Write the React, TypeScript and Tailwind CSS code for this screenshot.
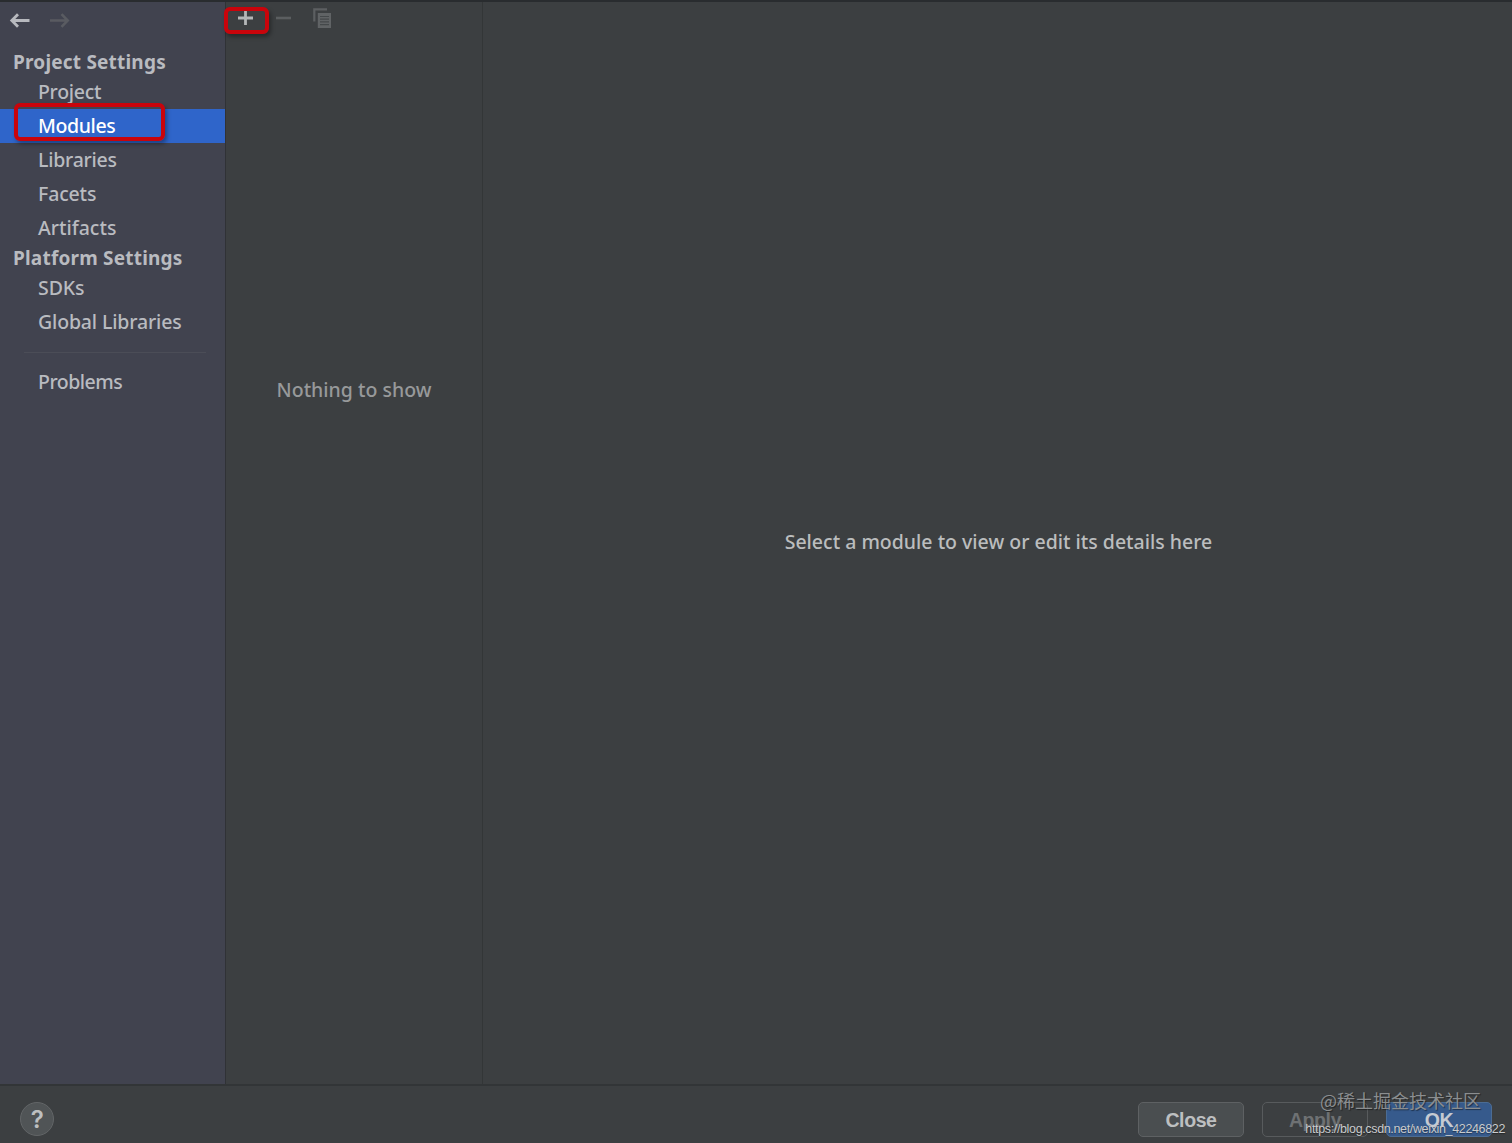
import clsx from "clsx";

interface NavItemProps {
  label: string;
  selected?: boolean;
  className?: string;
}

function NavItem({ label, selected, className }: NavItemProps) {
  return (
    <div
      className={clsx(
        "relative h-[34px] pl-[38px] leading-[33px]",
        selected ? "bg-[#2f65ca] text-white" : "text-[#b9bbc0]",
        className,
      )}
    >
      {label}
      {selected && (
        <span className="absolute left-[14px] -top-[6px] w-[151px] h-[38px] rounded-[6px] border-4 border-[#c9040b] shadow-[2px_3px_4px_rgba(0,0,0,0.35)]" />
      )}
    </div>
  );
}

function NavHeader({ label }: { label: string }) {
  return (
    <div className="h-[26px] pl-[13px] leading-[26px] text-[19px] font-bold tracking-[0.2px] text-[#b9bbc0]">
      {label}
    </div>
  );
}

function Sidebar() {
  return (
    <nav className="w-[225px] shrink-0 bg-[#41434f]">
      <div className="flex h-[47px] pt-[10px] pl-[9px] gap-[17px]">
        <svg width="22" height="17" viewBox="0 0 22 17" fill="none" stroke="#b7b9be" strokeWidth="2.8">
          <path d="M20.5 8.5H3M9 2.2L2.8 8.5L9 14.8" />
        </svg>
        <svg width="22" height="17" viewBox="0 0 22 17" fill="none" stroke="#595b61" strokeWidth="2.6">
          <path d="M2 8.5H19.5M13.5 2.2L19.7 8.5L13.5 14.8" />
        </svg>
      </div>
      <NavHeader label="Project Settings" />
      <NavItem label="Project" className="tracking-[-0.3px]" />
      <NavItem label="Modules" selected className="tracking-[-0.4px]" />
      <NavItem label="Libraries" className="tracking-[-0.25px]" />
      <NavItem label="Facets" className="tracking-[-0.15px]" />
      <NavItem label="Artifacts" />
      <NavHeader label="Platform Settings" />
      <NavItem label="SDKs" className="tracking-[-0.1px]" />
      <NavItem label="Global Libraries" className="tracking-[-0.15px]" />
      <div className="mt-[13px] mb-3 ml-6 mr-[19px] h-px bg-[#4b4d57]" />
      <NavItem label="Problems" className="tracking-[-0.5px]" />
    </nav>
  );
}

function ModuleList() {
  return (
    <section className="w-[258px] shrink-0 border-x border-l-[#303236] border-r-[#333637]">
      <div className="relative flex h-[40px] pt-[4px] pl-[11px]">
        <svg width="96" height="24" viewBox="0 0 96 24">
          <path d="M1 12H16M8.5 5V19" stroke="#b4b6b7" strokeWidth="2.8" />
          <path d="M39 12H54" stroke="#5b5e60" strokeWidth="2.6" />
          <path d="M77.3 15.5V3.3H90" fill="none" stroke="#5c5f61" strokeWidth="2.2" />
          <path d="M80.8 7H94V22H80.8Z" fill="#606365" />
          <path d="M83 10.5H92M83 13.2H92M83 15.9H92M83 18.6H92" stroke="#44484a" strokeWidth="1.2" />
        </svg>
        <span className="absolute -left-[2px] top-[5px] w-[45px] h-[27px] rounded-[6px] border-4 border-[#c9040b] shadow-[2px_3px_4px_rgba(0,0,0,0.35)]" />
      </div>
      <p className="mt-[333px] leading-[30px] text-center text-[#97999a]">Nothing to show</p>
    </section>
  );
}

function Footer() {
  return (
    <footer className="relative flex h-[59px] shrink-0 items-start justify-between border-t-2 border-[#323537] pt-4 px-5 font-['Liberation_Sans',sans-serif] text-[19.5px] font-bold tracking-[-0.4px]">
      <button className="size-[34px] rounded-full border border-[#626567] bg-[#505456] text-[24px] leading-[34px] text-[#bdbfc0] font-['Inter',sans-serif] font-semibold">
        ?
      </button>
      <div className="flex gap-[18px] leading-[35px]">
        <button className="h-[35px] w-[106px] rounded-[5px] border border-[#5e6163] bg-[#4a4e50] text-[#bdbfc0]">
          Close
        </button>
        <button className="h-[35px] w-[106px] rounded-[5px] border border-[#585b5d] text-[#6e7173]">Apply</button>
        <button className="h-[35px] w-[106px] rounded-[5px] border border-[#4b6c94] bg-[#365a8c] text-[#c5cad2]">
          OK
        </button>
      </div>
      <span className="absolute right-[31px] top-[1px] whitespace-nowrap font-['Noto_Sans_CJK_SC',sans-serif] text-[18px] leading-[26px] tracking-normal font-normal text-[#8b8e90] [text-shadow:1px_1px_1px_rgba(0,0,0,0.45)]">
        @稀土掘金技术社区
      </span>
      <span className="absolute right-[7px] top-[34px] whitespace-nowrap text-[12.5px] leading-[18px] tracking-[-0.35px] font-normal text-[#c9cbcd] [text-shadow:0_1px_1px_rgba(0,0,0,0.4)]">
        https://blog.csdn.net/weixin_42246822
      </span>
    </footer>
  );
}

export default function App() {
  return (
    <div className="flex h-[1143px] w-[1512px] flex-col overflow-hidden border-t-2 border-[#292c2f] bg-[#3c3f41] font-['Noto_Sans',sans-serif] text-[19.5px] font-medium">
      <div className="flex min-h-0 flex-1">
        <Sidebar />
        <ModuleList />
        <main className="flex flex-1 items-center justify-center pb-[2px] pl-[2px] text-[#bbbdbe]">
          Select a module to view or edit its details here
        </main>
      </div>
      <Footer />
    </div>
  );
}
